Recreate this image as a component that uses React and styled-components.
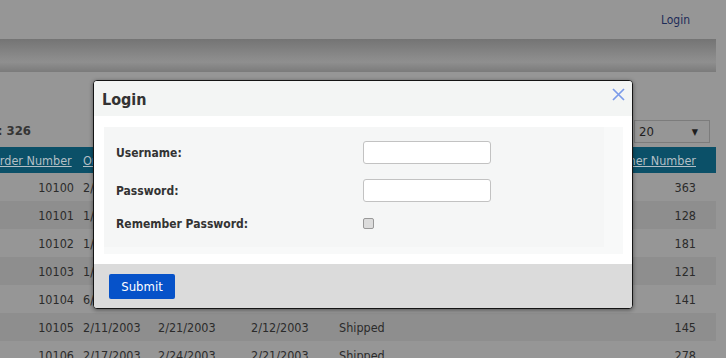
import React from 'react';
import styled, { createGlobalStyle } from 'styled-components';

const GlobalStyle = createGlobalStyle`
html, body {
  margin:0;
  padding:0;
  background:#969696;
}
body {
  font-family:"DejaVu Sans Condensed", "DejaVu Sans", sans-serif;
  font-size:12px;
  color:#2c2c2c;
}
`

const Page = styled.div`
position:relative;
width:726px;
height:358px;
overflow:hidden;
background:#969696;
`
const TopNav = styled.div`
height:39px;
display:flex;
justify-content:flex-end;
align-items:center;
padding-right:36px;
`
const NavLink = styled.a`
color:#1d2b58;
font-size:12px;
text-decoration:none;
`
const Band = styled.div`
width:716px;
height:33px;
background:linear-gradient(to bottom, #747474 0%, #8a8a8a 55%, #8f8f8f 70%, #7b7b7b 100%);
`
const Toolbar = styled.div`
width:716px;
display:flex;
justify-content:space-between;
align-items:center;
padding-top:48px;
height:23px;
margin-bottom:4px;
`
const TitleClip = styled.div`
width:31px;
overflow:hidden;
display:flex;
justify-content:flex-end;
white-space:nowrap;
font-weight:bold;
font-size:13px;
color:#353535;
margin-top:-3px;
`
const PageSize = styled.div`
width:76px;
height:23px;
box-sizing:border-box;
border:1px solid #7c7c7c;
margin-right:6px;
display:flex;
justify-content:space-between;
align-items:center;
padding:0 11px 0 4px;
font-size:13px;
color:#1e1e1e;
span { font-size:9px; }
`
const Table = styled.div`
margin-left:-10px;
width:726px;
font-size:12.5px;
`
const Row = styled.div`
display:grid;
grid-template-columns:90px 75px 93px 88px 1fr 140px;
height:${p => p.$head ? 26 : 28}px;
align-items:center;
background:${p => p.$head ? '#0b5068' : p.$odd ? '#8e8e8e' : 'transparent'};
color:${p => p.$head ? '#b3bfc5' : '#2b2b2b'};
`
const Cell = styled.div`
padding:${p => p.$right ? '0 20px 0 0' : '0 0 0 3px'};
text-align:${p => p.$right ? 'right' : 'left'};
white-space:nowrap;
overflow:hidden;
`
const FirstCell = styled(Cell)`
padding:0 6px 0 1px;
text-align:${p => p.$head ? 'left' : 'right'};
`
const HeadLink = styled.span`
text-decoration:underline;
`

const Modal = styled.div`
position:absolute;
left:93px;
top:80px;
width:540px;
box-sizing:border-box;
border:1px solid #151515;
border-radius:4px;
overflow:hidden;
background:#fff;
box-shadow:0 1px 4px rgba(0,0,0,0.45);
`
const ModalHeader = styled.div`
height:35px;
background:#f3f5f4;
display:flex;
justify-content:space-between;
align-items:center;
padding:0 7px 0 8px;
`
const ModalTitle = styled.div`
font-weight:bold;
font-size:16px;
color:#333;
margin-top:1px;
`
const Close = styled.button`
border:none;
background:none;
padding:0;
margin-top:-8px;
display:flex;
cursor:pointer;
`
const ModalBody = styled.div`
padding:11px 9px 10px 10px;
`
const Panel = styled.div`
background:#f8f9f9;
padding:0 19px 7px 0;
`
const Form = styled.div`
background:#f5f6f6;
height:120px;
box-sizing:border-box;
padding:14px 0 0 12px;
`
const FormRow = styled.div`
display:grid;
grid-template-columns:247px auto;
align-items:center;
height:23px;
margin-top:${p => p.$gap || 0}px;
`
const Label = styled.label`
font-weight:bold;
font-size:12px;
color:#333;
`
const Input = styled.input`
width:128px;
height:23px;
box-sizing:border-box;
border:1px solid #c2c2c2;
border-radius:3px;
background:#fff;
margin:0;
`
const Check = styled.input`
appearance:none;
width:11px;
height:11px;
margin:0 0 0 0;
border:1px solid #999;
border-radius:2px;
background:#dcdcdc;
`
const Footer = styled.div`
background:#dbdbdb;
height:44px;
box-sizing:border-box;
padding:10px 15px;
`
const Submit = styled.button`
width:66px;
height:25px;
border:none;
border-radius:2px;
background:#0652c9;
color:#fff;
font-family:inherit;
font-size:13px;
padding:0;
`

const orders = [
  ['10100', '2/24/2003', '3/3/2003', '2/26/2003', 'Shipped', '363'],
  ['10101', '1/9/2003', '1/18/2003', '1/11/2003', 'Shipped', '128'],
  ['10102', '1/10/2003', '1/18/2003', '1/14/2003', 'Shipped', '181'],
  ['10103', '1/29/2003', '2/7/2003', '2/2/2003', 'Shipped', '121'],
  ['10104', '6/3/2003', '6/9/2003', '6/5/2003', 'Shipped', '141'],
  ['10105', '2/11/2003', '2/21/2003', '2/12/2003', 'Shipped', '145'],
  ['10106', '2/17/2003', '2/24/2003', '2/21/2003', 'Shipped', '278'],
];

const heads = ['Order Number', 'Order Date', 'Required Date', 'Shipped Date', 'Status', 'Customer Number'];

export default function App() {
  return (
    <Page>
      <GlobalStyle />
      <TopNav><NavLink href="#">Login</NavLink></TopNav>
      <Band />
      <Toolbar>
        <TitleClip>Total Records: 326</TitleClip>
        <PageSize>20 <span>▼</span></PageSize>
      </Toolbar>
      <Table>
        <Row $head>
          <FirstCell $head><HeadLink>{heads[0]}</HeadLink></FirstCell>
          {heads.slice(1, 5).map(h => <Cell key={h}><HeadLink>{h}</HeadLink></Cell>)}
          <Cell $right><HeadLink>{heads[5]}</HeadLink></Cell>
        </Row>
        {orders.map((o, i) => (
          <Row key={o[0]} $odd={i % 2 === 1}>
            <FirstCell>{o[0]}</FirstCell>
            <Cell>{o[1]}</Cell>
            <Cell>{o[2]}</Cell>
            <Cell>{o[3]}</Cell>
            <Cell>{o[4]}</Cell>
            <Cell $right>{o[5]}</Cell>
          </Row>
        ))}
      </Table>

      <Modal>
        <ModalHeader>
          <ModalTitle>Login</ModalTitle>
          <Close aria-label="close">
            <svg width="13" height="13" viewBox="0 0 13 13">
              <path d="M1 1 L12 12 M12 1 L1 12" stroke="#7b9be9" strokeWidth="1.7" fill="none" />
            </svg>
          </Close>
        </ModalHeader>
        <ModalBody>
          <Panel>
            <Form>
              <FormRow>
                <Label>Username:</Label>
                <Input type="text" />
              </FormRow>
              <FormRow $gap={15}>
                <Label>Password:</Label>
                <Input type="password" />
              </FormRow>
              <FormRow $gap={10}>
                <Label>Remember Password:</Label>
                <Check type="checkbox" />
              </FormRow>
            </Form>
          </Panel>
        </ModalBody>
        <Footer>
          <Submit>Submit</Submit>
        </Footer>
      </Modal>
    </Page>
  );
}
